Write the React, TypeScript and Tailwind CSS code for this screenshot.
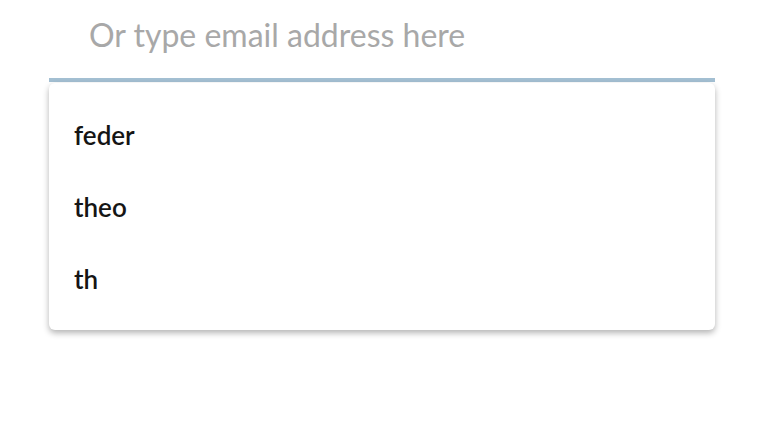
import React from 'react';

const suggestions = ['feder', 'theo', 'th'];

export default function App() {
  return (
    <div className="w-[761px] h-[432px] bg-white" style={{ fontFamily: 'Lato, "Noto Sans", sans-serif' }}>
      <div className="ml-[49px] w-[666px]">
        {/* Email input */}
        <div className="border-b-4 border-[#a3bfd2]">
          <input
            type="text"
            placeholder="Or type email address here"
            className="w-full pl-[40px] pt-[16px] pb-[24px] text-[32px] leading-[38px] text-[#1a1a1a] placeholder:text-[#a8a8a8] outline-none bg-transparent"
          />
        </div>

        {/* Suggestions */}
        <div className="mt-px bg-white rounded-md shadow-[0_3px_6px_rgba(0,0,0,0.3)] pt-[16px] pb-[15px]">
          {suggestions.map((s) => (
            <div key={s} className="h-[72px] pl-[25px] text-[26px] leading-[72px] font-semibold text-[#151515]">
              {s}
            </div>
          ))}
        </div>
      </div>
    </div>
  );
}
